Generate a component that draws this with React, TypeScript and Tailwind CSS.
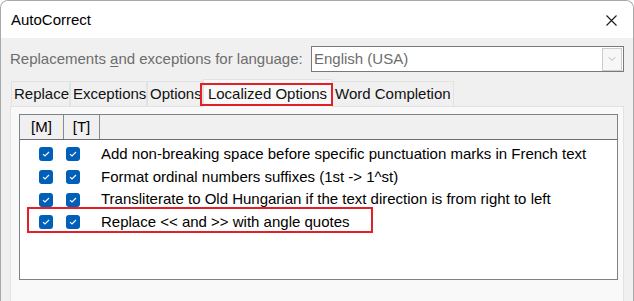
import { ChevronDown } from "lucide-react";

const rows = [
  "Add non-breaking space before specific punctuation marks in French text",
  "Format ordinal numbers suffixes (1st -> 1^st)",
  "Transliterate to Old Hungarian if the text direction is from right to left",
  "Replace << and >> with angle quotes",
];

const tabs = [
  { label: "Replace", w: "w-[59px]" },
  { label: "Exceptions", w: "w-[77px]" },
  { label: "Options", w: "w-[56px]" },
  { label: "Localized Options", w: "w-[129px]", active: true },
  { label: "Word Completion", w: "w-[122px]" },
];

function Check() {
  return (
    <span className="flex h-[14px] w-[14px] items-center justify-center rounded-[3px] bg-[#005fb8]">
      <svg width="8" height="6" viewBox="0 0 8 6" fill="none">
        <path d="M1 3.2 L3 5 L7 1" stroke="white" strokeWidth="1.1" />
      </svg>
    </span>
  );
}

export default function App() {
  return (
    <div className="h-[301px] w-[634px] overflow-hidden rounded-t-[8px] border-x border-t border-[#a9a9a9] bg-[#f0f0f0] font-['Segoe_UI','Liberation_Sans',sans-serif] text-[15px] text-black">
      {/* title bar */}
      <div className="flex h-[37px] items-center justify-between bg-white pl-[10px] pr-[16px]">
        <span className="pt-[2px]">AutoCorrect</span>
        <svg width="11" height="11" viewBox="0 0 11 11" className="mt-[2px]">
          <path d="M0.5 0.5 L10.5 10.5 M10.5 0.5 L0.5 10.5" stroke="#1a1a1a" strokeWidth="1.1" />
        </svg>
      </div>

      {/* language row */}
      <div className="mt-[8px] flex h-[26px] items-center pl-[9px]">
        <span className="w-[301px] text-[#6d6d6d]">
          Replacements <span className="underline underline-offset-2">a</span>nd exceptions for language:
        </span>
        <div className="flex h-[26px] w-[313px] items-center justify-between border border-[#7a7a7a] bg-white pl-[2px] pr-[1px]">
          <span className="text-[#6d6d6d]">English (USA)</span>
          <span className="flex h-[23px] w-[20px] items-center justify-center border border-[#cccccc] bg-[#f7f7f7]">
            <ChevronDown className="h-[12px] w-[12px] text-[#a0a0a0]" strokeWidth={1.5} />
          </span>
        </div>
      </div>

      {/* tabs */}
      <div className="mt-[7px] flex h-[27px] items-end pl-[10px]">
        {tabs.map((t) =>
          t.active ? (
            <div
              key={t.label}
              className={`relative z-10 -mb-[1px] flex h-[28px] ${t.w} items-center justify-center border-x border-t border-[#e2e2e2] bg-[#f9f9f9] text-[#111]`}
            >
              <span className="pt-[1px]">{t.label}</span>
              <span className="absolute left-[-4px] top-[3px] h-[23px] w-[133px] border-2 border-[#e32028]" />
            </div>
          ) : (
            <div
              key={t.label}
              className={`flex h-[25px] ${t.w} items-center border-x border-t border-[#e2e2e2] pl-[2px] text-[#111]`}
            >
              {t.label}
            </div>
          )
        )}
      </div>

      {/* tab page */}
      <div className="ml-[9px] h-[200px] w-[614px] border-x border-t border-[#e2e2e2] bg-[#f9f9f9] pl-[8px] pt-[7px]">
        <div className="relative h-[166px] w-[599px] border border-[#7c828a] bg-white">
          <div className="flex h-[25px] border-b border-[#6d6d6d] bg-[#f0f0f0]">
            <div className="flex w-[44px] items-center justify-center border-r border-[#8a8a8a]">[M]</div>
            <div className="flex w-[36px] items-center justify-center border-r border-[#8a8a8a]">[T]</div>
          </div>
          <div className="pt-[3px]">
            {rows.map((r) => (
              <div key={r} className="flex h-[22.67px] items-center pl-[19px]">
                <Check />
                <span className="ml-[13px]">
                  <Check />
                </span>
                <span className="ml-[21px] whitespace-pre">{r}</span>
              </div>
            ))}
          </div>
          <span className="absolute left-[7px] top-[92px] h-[26px] w-[346px] border-2 border-[#e32028]" />
        </div>
      </div>
    </div>
  );
}
